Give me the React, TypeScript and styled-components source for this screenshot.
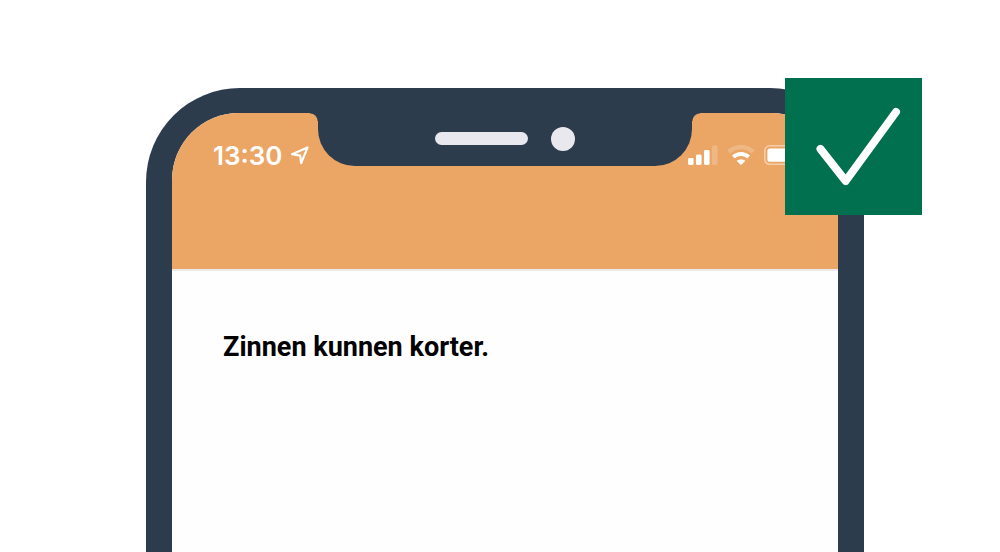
import React from "react";
import styled, { createGlobalStyle } from "styled-components";

const color = {
  frame: "#2d3c4d",
  accent: "#eba565",
  screen: "#fefefe",
  hardware: "#e9e8ee",
  divider: "#ebeaec",
  success: "#00704f",
};

const GlobalStyle = createGlobalStyle`
  *, *::before, *::after { box-sizing: border-box; }
  html, body { margin: 0; background: #fff; }
  body { overflow: hidden; font-family: Roboto, "Liberation Sans", sans-serif; }
`;

const Page = styled.main`
  position: relative;
  display: flex;
  min-height: 100vh;
  padding: 88px 136px 0 146px;
`;

const Phone = styled.section`
  display: flex;
  flex: 1;
  padding: 25px 26px 0;
  border-radius: 94px 94px 0 0;
  background: ${color.frame};
`;

const Screen = styled.div`
  display: flex;
  flex: 1;
  flex-direction: column;
  overflow: hidden;
  border-radius: 67px 67px 0 0;
  background: ${color.screen};
`;

const Header = styled.header`
  display: grid;
  grid-template-columns: 1fr 374px 1fr;
  align-items: start;
  height: 158px;
  border-bottom: 2px solid ${color.divider};
  background: ${color.accent};
`;

const StatusGroup = styled.div<{ $side: "left" | "right" }>`
  display: flex;
  align-items: center;
  gap: ${(p) => (p.$side === "left" ? "7px" : "9px")};
  height: 32px;
  margin-top: ${(p) => (p.$side === "left" ? "27px" : "26px")};
  min-width: 0;
  padding-left: ${(p) => (p.$side === "left" ? "41px" : "0")};
  margin-left: ${(p) => (p.$side === "left" ? "0" : "-4px")};
`;

const Time = styled.time`
  color: #fff;
  font: 600 26px/32px Inter, "Liberation Sans", sans-serif;
`;

const Icon = styled.svg`
  display: block;
  flex: none;
`;

const Notch = styled.div`
  position: relative;
  display: flex;
  align-items: center;
  justify-content: center;
  gap: 23px;
  height: 53px;
  padding-bottom: 2px;
  border-radius: 0 0 37px 37px;
  background: ${color.frame};

  &::before,
  &::after {
    content: "";
    position: absolute;
    top: 0;
    width: 8px;
    height: 8px;
  }
  &::before {
    right: 100%;
    background: radial-gradient(circle at 0 100%, transparent 7px, ${color.frame} 8px);
  }
  &::after {
    left: 100%;
    background: radial-gradient(circle at 100% 100%, transparent 7px, ${color.frame} 8px);
  }
`;

const Speaker = styled.span`
  width: 93px;
  height: 13px;
  border-radius: 7px;
  background: ${color.hardware};
`;

const Camera = styled.span`
  width: 24px;
  height: 24px;
  border-radius: 50%;
  background: ${color.hardware};
`;

const Content = styled.div`
  padding: 60px 51px;
`;

const Message = styled.p`
  margin: 0;
  color: #000;
  font-size: 27px;
  font-weight: 700;
  line-height: 32px;
`;

const Badge = styled.div`
  position: absolute;
  top: 78px;
  right: 78px;
  width: 137px;
  height: 137px;
  background: ${color.success};
`;

const LocationIcon = () => (
  <Icon width="20" height="20" viewBox="0 0 20 20" aria-hidden="true">
    <path
      d="M17.6 1.4 L2 8.2 L10.2 9.6 L11.2 17.2 Z"
      fill="none"
      stroke="#fff"
      strokeWidth="2.2"
      strokeLinejoin="round"
    />
  </Icon>
);

const SignalIcon = () => (
  <Icon width="30" height="20" viewBox="0 0 30 20" fill="#fff" aria-hidden="true">
    <rect x="0" y="13" width="5.6" height="7" rx="1.4" />
    <rect x="8" y="9.5" width="5.6" height="10.5" rx="1.4" />
    <rect x="16" y="5" width="5.6" height="15" rx="1.4" />
    <rect x="24" y="0.5" width="5.6" height="19.5" rx="1.4" opacity="0.2" />
  </Icon>
);

const WifiIcon = () => (
  <Icon width="28" height="20" viewBox="0 0 28 20" fill="none" aria-hidden="true">
    <path d="M1.8 7 A17.5 17.5 0 0 1 26.2 7" stroke="#fff" strokeWidth="4.4" opacity="0.2" />
    <path d="M6.4 12 A11.2 11.2 0 0 1 21.6 12" stroke="#fff" strokeWidth="4" />
    <path d="M9.6 15.8 Q14 12.8 18.4 15.8 L14.7 19.5 Q14 20.2 13.3 19.5 Z" fill="#fff" />
  </Icon>
);

const BatteryIcon = () => (
  <Icon width="44" height="20" viewBox="0 0 44 20" fill="none" aria-hidden="true">
    <rect x="0.8" y="0.8" width="38.4" height="18.6" rx="5" stroke="#fff" strokeWidth="1.6" opacity="0.45" />
    <rect x="3.4" y="3.4" width="33.2" height="13.4" rx="2.6" fill="#fff" />
    <path d="M41 7 Q44 10 41 13 Z" fill="#fff" opacity="0.45" />
  </Icon>
);

export default function App() {
  return (
    <>
      <GlobalStyle />
      <Page>
        <Phone>
          <Screen>
            <Header>
              <StatusGroup $side="left">
                <Time>13:30</Time>
                <LocationIcon />
              </StatusGroup>
              <Notch>
                <Speaker />
                <Camera />
              </Notch>
              <StatusGroup $side="right">
                <SignalIcon />
                <WifiIcon />
                <BatteryIcon />
              </StatusGroup>
            </Header>
            <Content>
              <Message>Zinnen kunnen korter.</Message>
            </Content>
          </Screen>
        </Phone>
        <Badge>
          <svg width="137" height="137" viewBox="0 0 137 137" role="img" aria-label="Goed">
            <path
              d="M35.5 71 L60.7 103 L111 34"
              fill="none"
              stroke="#fff"
              strokeWidth="8"
              strokeLinecap="round"
              strokeLinejoin="round"
            />
          </svg>
        </Badge>
      </Page>
    </>
  );
}
